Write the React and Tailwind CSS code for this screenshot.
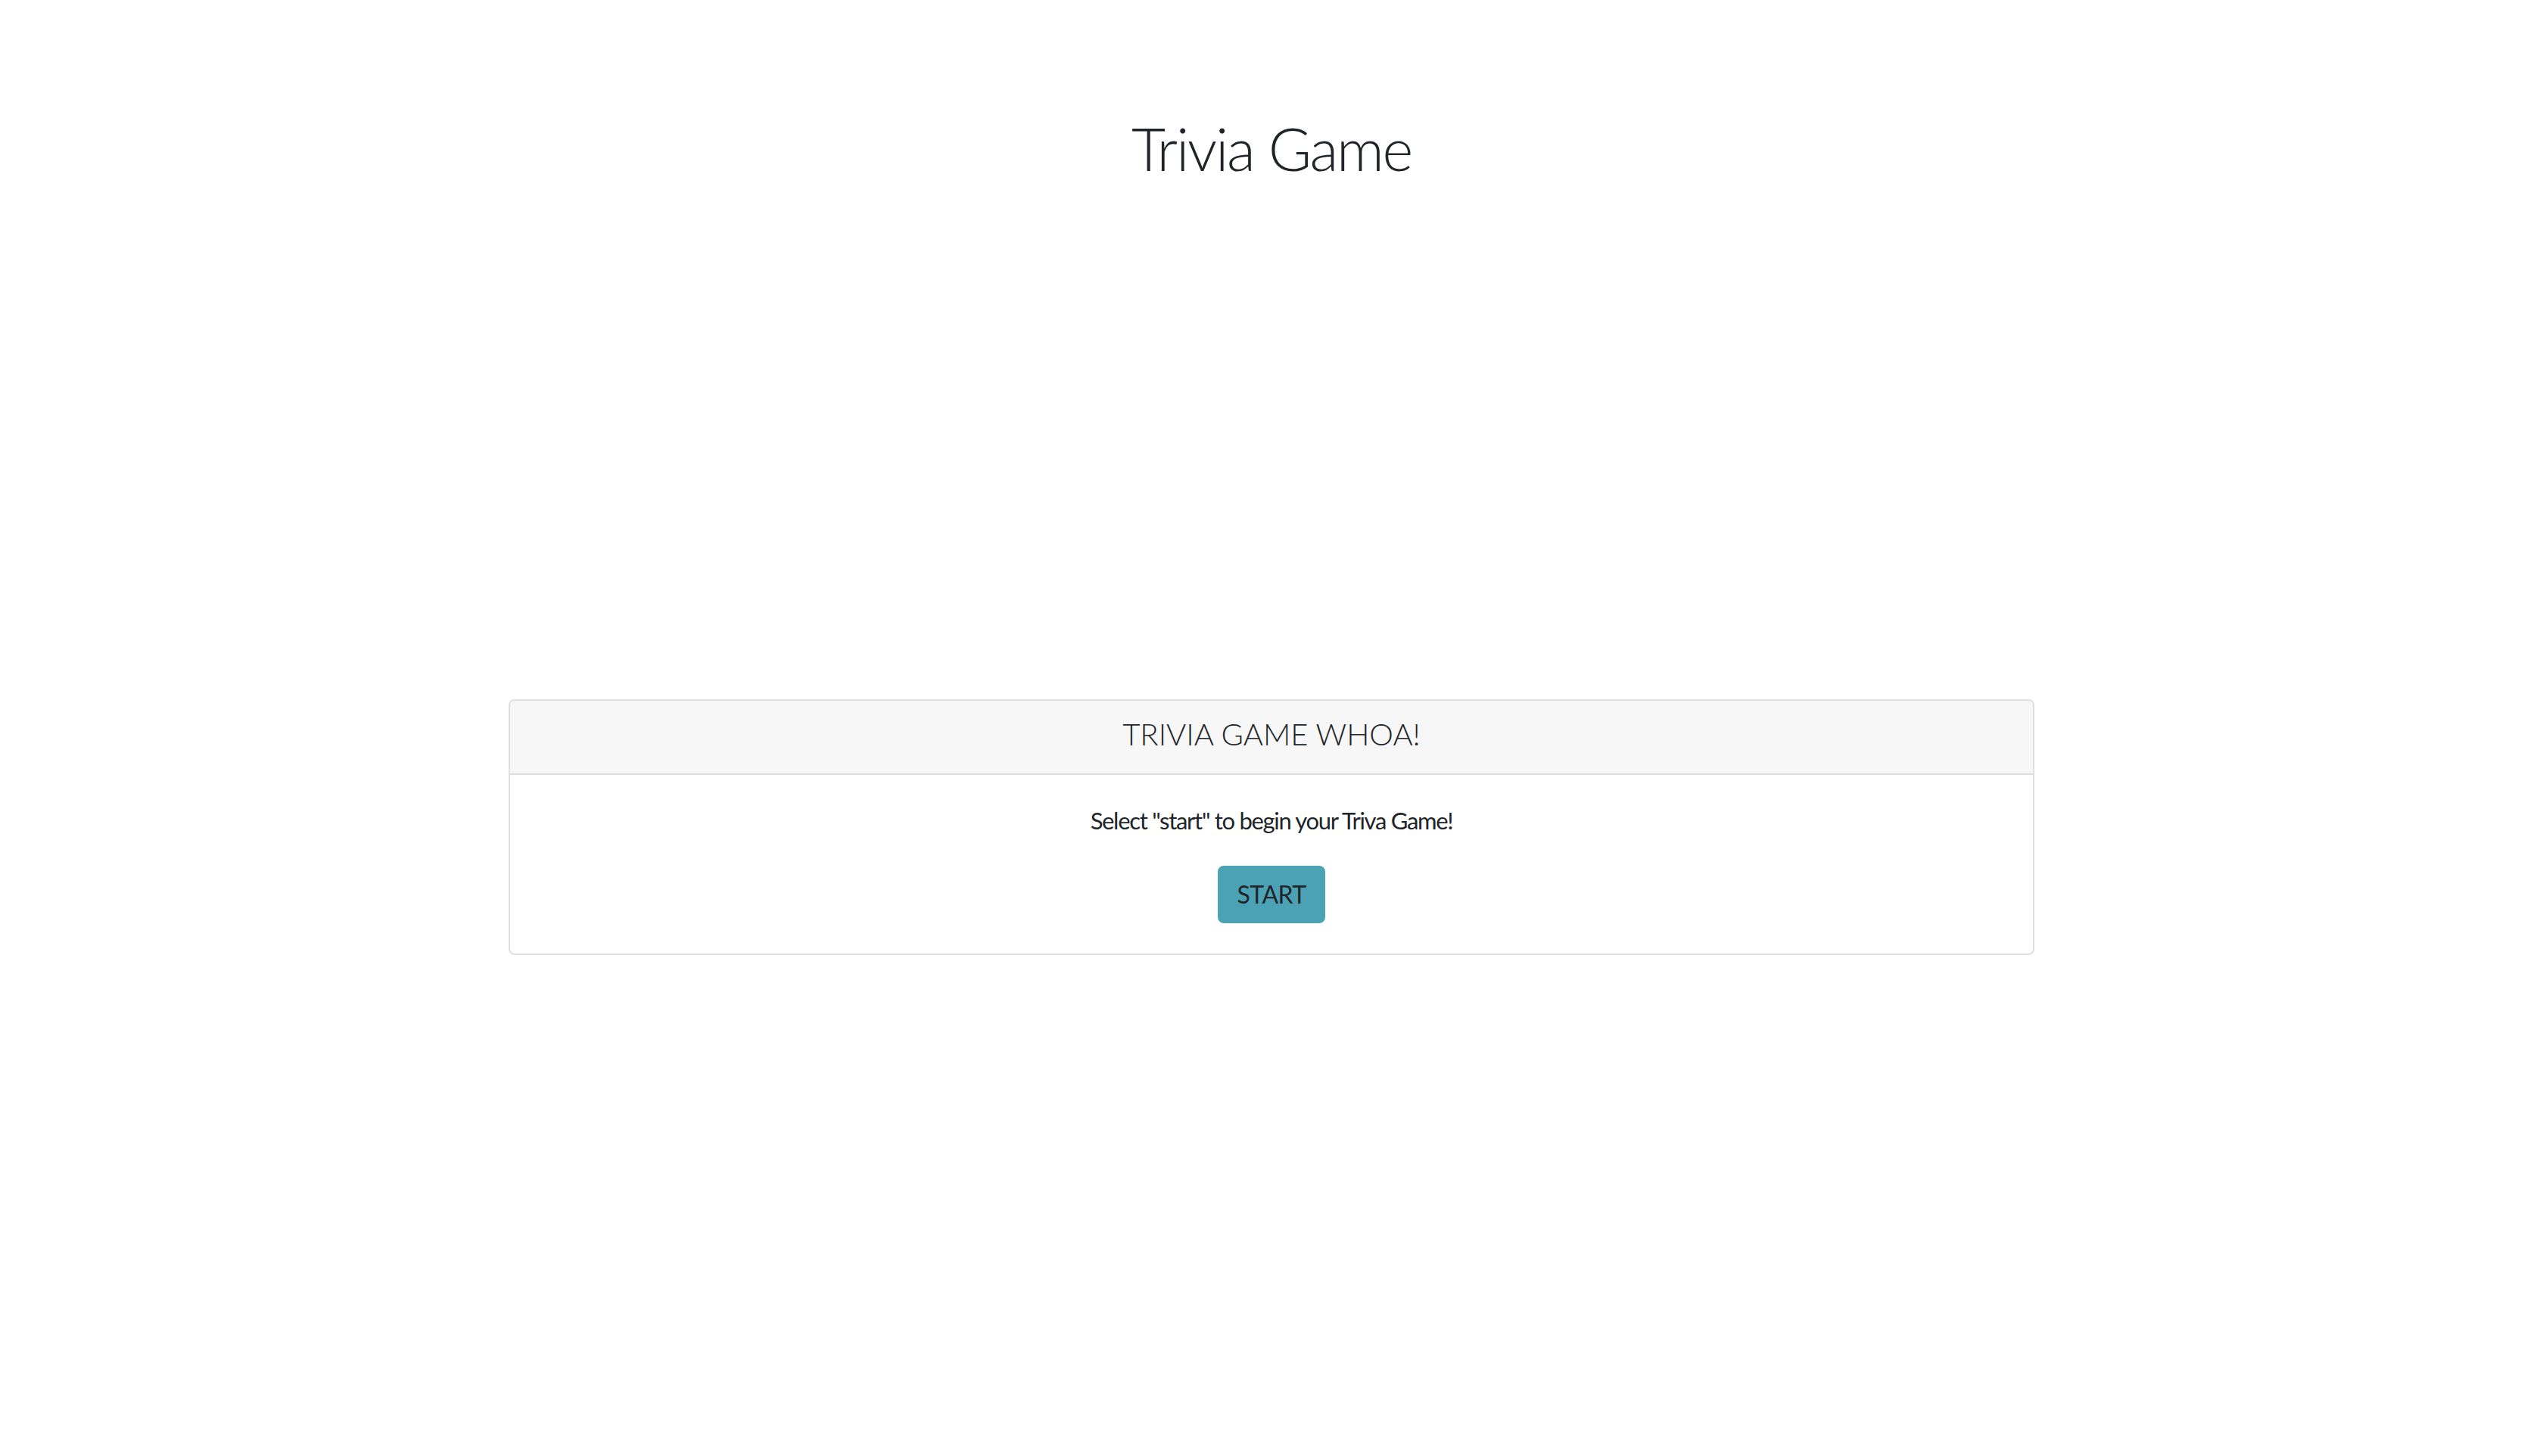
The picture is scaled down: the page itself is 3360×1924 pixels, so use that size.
export default function App() {
  return (
    <div
      className="min-h-screen bg-white text-[#212529]"
      style={{ fontFamily: "Lato, 'Open Sans', sans-serif" }}
    >
      <div className="mx-auto w-[2016px] pt-[148px]">
        {/* Title */}
        <h1 className="text-center text-[78px] leading-[96px] font-light tracking-[-2.2px]">
          Trivia Game
        </h1>

        {/* Card */}
        <div className="mt-[680px] rounded-[8px] border-2 border-[#dfdfdf] bg-white">
          <div className="rounded-t-[6px] border-b-2 border-[#dcdcdc] bg-[#f7f7f7] px-[40px] pt-[20px] pb-[28px]">
            <h5 className="text-center text-[40px] leading-[48px] font-light tracking-[0px]">
              TRIVIA GAME WHOA!
            </h5>
          </div>
          <div className="flex flex-col items-center px-[40px] pt-[36px] pb-[40px]">
            <p className="mb-[36px] text-[31px] leading-[48px] tracking-[-1.3px]">
              Select "start" to begin your Triva Game!
            </p>
            <button className="h-[76px] rounded-[8px] bg-[#4ba2b5] px-[26px] text-[32px] tracking-[-0.6px] text-[#212529]">
              START
            </button>
          </div>
        </div>
      </div>
    </div>
  );
}
